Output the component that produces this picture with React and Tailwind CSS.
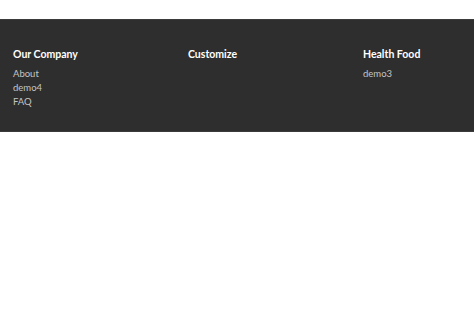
import React from "react";

const columns = [
  { title: "Our Company", links: ["About", "demo4", "FAQ"] },
  { title: "Customize", links: [] },
  { title: "Health Food", links: ["demo3"] },
];

const App = () => {
  return (
    <div className="min-h-screen bg-white font-['Lato',sans-serif]">
      <div className="h-[19px]" />
      <footer className="bg-[#2e2e2e] border-t border-b border-[#3b3b3b] pt-[27px] pb-[22px] pl-[13px]">
        <div className="grid grid-cols-[175px_175px_1fr]">
          {columns.map((col) => (
            <div key={col.title}>
              <h4 className="text-[10.5px] leading-[14px] font-bold text-white mb-[6px]">
                {col.title}
              </h4>
              <ul>
                {col.links.map((link) => (
                  <li key={link} className="text-[9.5px] leading-[14px] text-[#c4c4c4]">
                    {link}
                  </li>
                ))}
              </ul>
            </div>
          ))}
        </div>
      </footer>
    </div>
  );
};

export default App;
